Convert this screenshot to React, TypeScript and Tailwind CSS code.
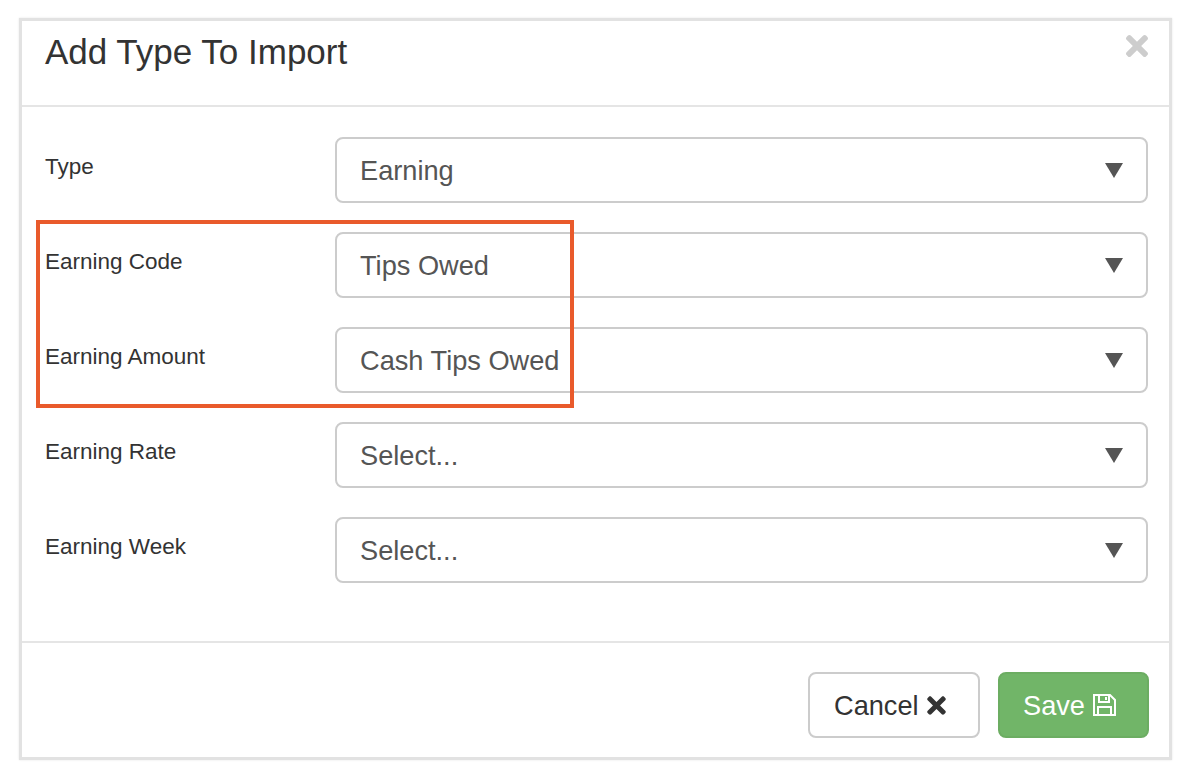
import { FaTimes } from "react-icons/fa";

const rows = [
  { label: "Type", value: "Earning" },
  { label: "Earning Code", value: "Tips Owed" },
  { label: "Earning Amount", value: "Cash Tips Owed" },
  { label: "Earning Rate", value: "Select..." },
  { label: "Earning Week", value: "Select..." },
];

function SelectRow({ label, value }: { label: string; value: string }) {
  return (
    <div className="flex items-start">
      <label className="w-[291px] shrink-0 pl-[1px] pt-[14px] text-[22.5px] leading-[32px] text-[#333]">{label}</label>
      <div className="flex h-[66px] flex-1 items-center justify-between rounded-[8px] border-2 border-[#ccc] pl-[23px] pr-[23px] text-[27.2px] text-[#555]">
        <span className="pt-[2px]">{value}</span>
        <svg width="18" height="15" viewBox="0 0 18 15">
          <polygon points="0,0 18,0 9,15" fill="#555" />
        </svg>
      </div>
    </div>
  );
}

export default function App() {
  return (
    <div className="relative h-[776px] w-[1188px] overflow-hidden bg-white font-['Liberation_Sans',Arial,sans-serif]">
      <div className="ml-[19px] mt-[18px] flex h-[742px] w-[1153px] flex-col border-[3px] border-[#e2e2e2] bg-white shadow-[0_0_2px_#e5e5e5]">
        <div className="relative h-[86px] shrink-0 border-b-2 border-[#e5e5e5] pl-[23px]">
          <h4 className="pt-[10px] text-[35px] leading-[42px] text-[#333]">Add Type To Import</h4>
          <FaTimes className="absolute right-[16px] top-[9px] text-[32px] text-[#cdcdcd]" />
        </div>
        <div className="flex flex-1 flex-col gap-[29px] pl-[22px] pr-[21px] pt-[30px]">
          {rows.map((r) => (
            <SelectRow key={r.label} label={r.label} value={r.value} />
          ))}
        </div>
        <div className="flex h-[116px] shrink-0 items-start justify-end gap-[18px] border-t-2 border-[#e5e5e5] pr-[20px] pt-[29px]">
          <button className="flex h-[66px] w-[172px] items-center gap-[4px] rounded-[8px] border-2 border-[#ccc] bg-white pl-[24px] text-[27.2px] text-[#333]">
            <span className="pt-[2px]">Cancel</span>
            <FaTimes className="text-[27px]" />
          </button>
          <button className="flex h-[66px] w-[151px] items-center gap-[8px] rounded-[8px] border-2 border-[#6cad62] bg-[#71b568] pl-[23px] text-[27.2px] text-white">
            <span className="pt-[2px]">Save</span>
            <svg width="23" height="22" viewBox="0 0 23 22" fill="none" stroke="white" strokeWidth="2">
              <path d="M1 1H17L22 6V21H1Z" />
              <path d="M6 1V8H16V1" />
              <path d="M13 3V6" />
              <path d="M5 21V13H18V21" />
            </svg>
          </button>
        </div>
      </div>
      <div className="absolute left-[36px] top-[220px] h-[188px] w-[538px] border-[4px] border-[#e95a2b]" />
    </div>
  );
}
